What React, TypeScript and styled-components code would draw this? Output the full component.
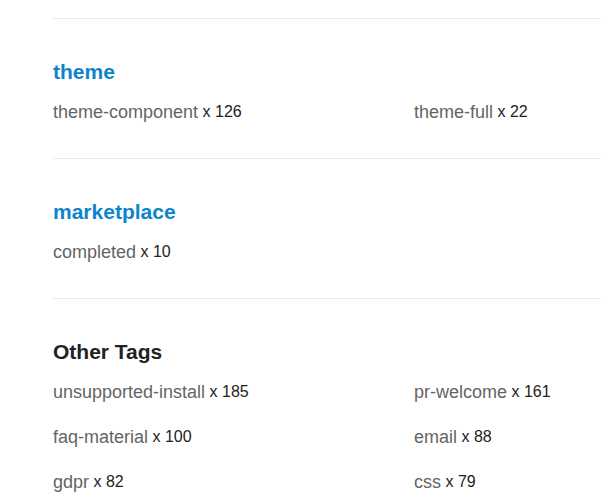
import React from 'react';
import styled, { createGlobalStyle } from 'styled-components';

const Global = createGlobalStyle`
  body {
    margin: 0;
    background: #fff;
    font-family: "Liberation Sans", Arial, Helvetica, sans-serif;
  }
`;

const Page = styled.div`
  padding: 18px 0 0 53px;
  overflow: hidden;
`;

const Section = styled.section`
  border-top: 1px solid #e9e9e9;
  padding: 40px 0 33px;
`;

type HeadingProps = {
  plain?: boolean;
}
const Heading = styled.h3<HeadingProps>`
  margin: 0 0 14px;
  font-size: 21px;
  line-height: 25px;
  font-weight: bold;
  color: ${(props) => (props.plain ? "#222" : "#0e83cd")};
`;

const TagGrid = styled.div`
  display: grid;
  grid-template-columns: 361px 361px;
  row-gap: 18px;
`;

const TagBox = styled.div`
  height: 27px;
  line-height: 27px;
  white-space: nowrap;
`;

const TagName = styled.a`
  font-size: 18px;
  color: #646464;
  text-decoration: none;
`;

const TagCount = styled.span`
  font-size: 16px;
  color: #222;
  vertical-align: 1px;
`;

type Tag = [string, number];

const sections: { title: string; plain?: boolean; tags: Tag[] }[] = [
  { title: "theme", tags: [["theme-component", 126], ["theme-full", 22]] },
  { title: "marketplace", tags: [["completed", 10]] },
  {
    title: "Other Tags",
    plain: true,
    tags: [
      ["unsupported-install", 185],
      ["pr-welcome", 161],
      ["faq-material", 100],
      ["email", 88],
      ["gdpr", 82],
      ["css", 79],
    ],
  },
];

const App = () => {
  return (
    <>
      <Global />
      <Page>
        {sections.map((s) => (
          <Section key={s.title}>
            <Heading plain={s.plain}>{s.title}</Heading>
            <TagGrid>
              {s.tags.map(([name, count]) => (
                <TagBox key={name}>
                  <TagName href="#">{name}</TagName> <TagCount>x {count}</TagCount>
                </TagBox>
              ))}
            </TagGrid>
          </Section>
        ))}
      </Page>
    </>
  );
}

export default App;
